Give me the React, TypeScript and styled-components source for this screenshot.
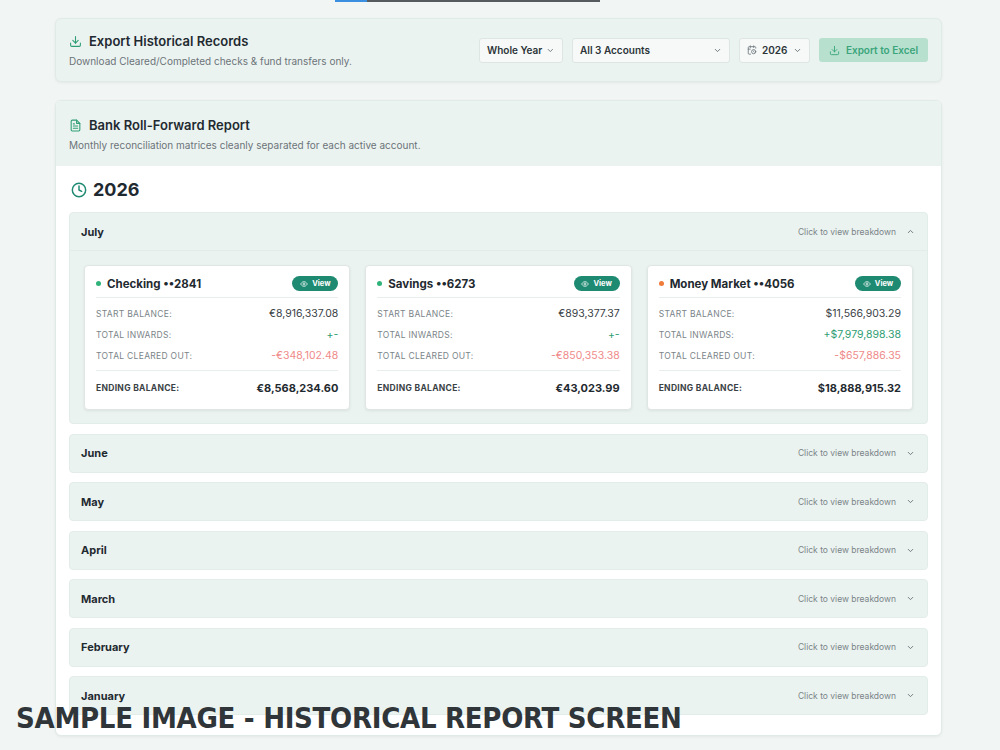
import React from "react";
import styled, { createGlobalStyle } from "styled-components";

const Global = createGlobalStyle`
  html, body { margin: 0; padding: 0; background: #f1f5f4; font-family: Inter, "Noto Sans", sans-serif; color: #1f2a30; }
  * { box-sizing: border-box; }
`;

const Page = styled.div`
  position: relative;
  width: 1000px;
  height: 750px;
  overflow: hidden;
  padding: 0 58px 0 55px;
`;
const TopBar = styled.div`
  display: flex;
  margin-left: 280px;
  height: 2px;
  margin-bottom: 16px;
`;
const Seg = styled.div<{ $w: number; $c: string }>`
  width: ${(p) => p.$w}px;
  background: ${(p) => p.$c};
`;
const ExportCard = styled.div`
  display: flex;
  align-items: center;
  justify-content: space-between;
  height: 64px;
  background: #ebf3f0;
  border: 1px solid #e0ebe7;
  border-radius: 6px;
  box-shadow: 0 1px 3px rgba(0,0,0,0.06);
  padding: 0 13px;
  margin-bottom: 18px;
`;
const TitleRow = styled.div`
  display: flex;
  align-items: center;
  gap: 7px;
  font-size: 13px;
  font-weight: 600;
  color: #1f2a30;
`;
const Sub = styled.div`
  font-size: 10px;
  color: #6b7479;
  margin-top: 6px;
`;
const Controls = styled.div`
  display: flex;
  gap: 9px;
  align-items: center;
`;
const Select = styled.div<{ $w: number }>`
  width: ${(p) => p.$w}px;
  height: 25px;
  border: 1px solid #dde6e3;
  border-radius: 3px;
  background: #f6f9f8;
  display: flex;
  align-items: center;
  justify-content: space-between;
  padding: 0 7px 0 7px;
  font-size: 10px;
  font-weight: 600;
  color: #2c3438;
  gap: 4px;
  white-space: nowrap;
`;
const SelInner = styled.span`
  display: flex;
  align-items: center;
  gap: 5px;
`;
const ExportBtn = styled.div`
  height: 24px;
  width: 109px;
  background: #b8e0cf;
  border-radius: 3px;
  display: flex;
  align-items: center;
  justify-content: center;
  gap: 6px;
  font-size: 10px;
  font-weight: 600;
  color: #3aa57a;
  white-space: nowrap;
`;
const ReportCard = styled.div`
  background: #fff;
  border: 1px solid #e0ebe7;
  border-radius: 6px;
  box-shadow: 0 1px 3px rgba(0,0,0,0.06);
  overflow: hidden;
  height: 636px;
`;
const ReportHead = styled.div`
  background: #ebf3f0;
  padding: 16px 13px 15px;
  height: 65px;
`;
const ReportBody = styled.div`
  padding: 13px 13px 0;
`;
const Year = styled.div`
  display: flex;
  align-items: center;
  gap: 6px;
  font-size: 18px;
  font-weight: 700;
  margin-left: 2px;
  margin-bottom: 12px;
`;
const List = styled.div`
  display: flex;
  flex-direction: column;
  gap: 9.5px;
`;
const Month = styled.div`
  background: #ebf3f0;
  border: 1px solid #e2ece8;
  border-radius: 4px;
`;
const MonthHead = styled.div`
  height: 37px;
  display: flex;
  align-items: center;
  justify-content: space-between;
  padding: 0 12px 0 11px;
  font-size: 11px;
  font-weight: 700;
  color: #1f2a30;
`;
const Hint = styled.span`
  display: flex;
  align-items: center;
  gap: 10px;
  font-size: 8.5px;
  font-weight: 400;
  color: #7a8488;
`;
const Cards = styled.div`
  border-top: 1px solid #e2ece8;
  display: grid;
  grid-template-columns: repeat(3, 1fr);
  gap: 15px;
  padding: 14px 14px 13px;
`;
const Acct = styled.div`
  background: #fff;
  border: 1px solid #dfe6e4;
  border-radius: 4px;
  box-shadow: 0 1px 3px rgba(0,0,0,0.07);
  padding: 10px 11px 9px;
`;
const AcctHead = styled.div`
  display: flex;
  align-items: center;
  justify-content: space-between;
  padding-bottom: 6px;
  border-bottom: 1px solid #e8eeec;
`;
const AcctName = styled.span`
  display: flex;
  align-items: center;
  gap: 6px;
  font-size: 11.5px;
  font-weight: 700;
`;
const Dot = styled.span<{ $c: string }>`
  width: 5px;
  height: 5px;
  border-radius: 50%;
  background: ${(p) => p.$c};
`;
const ViewBtn = styled.span`
  background: #1f8a72;
  color: #fff;
  font-size: 7.5px;
  font-weight: 700;
  border-radius: 8px;
  height: 15px;
  width: 46px;
  display: flex;
  align-items: center;
  justify-content: center;
  gap: 4px;
`;
const Lines = styled.div`
  padding-top: 5px;
`;
const Line = styled.div<{ $total?: boolean }>`
  display: flex;
  justify-content: space-between;
  align-items: center;
  height: 21px;
  font-size: 8.5px;
  letter-spacing: 0.3px;
  color: #7a8488;
  ${(p) => p.$total && `border-top:1px solid #e8eeec; margin-top:4px; height:30px; padding-top:4px; color:#3a4246; font-weight:700;`}
`;
const Val = styled.span<{ $c?: string; $b?: boolean }>`
  font-size: ${(p) => (p.$b ? "11px" : "10.5px")};
  letter-spacing: 0;
  color: ${(p) => p.$c || "#3a4246"};
  font-weight: ${(p) => (p.$b ? 700 : 400)};
`;
const Watermark = styled.div`
  position: absolute;
  left: 16px;
  top: 701px;
  font-family: "DejaVu Sans Condensed", "DejaVu Sans", sans-serif;
  font-weight: 700;
  font-size: 29px;
  letter-spacing: -0.3px;
  color: #2f3538;
  white-space: nowrap;
`;

const Chevron = ({ up }: { up?: boolean }) => (
  <svg width="9" height="9" viewBox="0 0 24 24" fill="none" stroke="#6b7479" strokeWidth="2.5" strokeLinecap="round" strokeLinejoin="round">
    <path d={up ? "M6 15l6-6 6 6" : "M6 9l6 6 6-6"} />
  </svg>
);
const DownloadIcon = ({ c = "#2f9e74", s = 13 }: { c?: string; s?: number }) => (
  <svg width={s} height={s} viewBox="0 0 24 24" fill="none" stroke={c} strokeWidth="2" strokeLinecap="round" strokeLinejoin="round">
    <path d="M21 15v4a2 2 0 0 1-2 2H5a2 2 0 0 1-2-2v-4" />
    <path d="M7 10l5 5 5-5" />
    <path d="M12 15V3" />
  </svg>
);
const FileIcon = () => (
  <svg width="13" height="13" viewBox="0 0 24 24" fill="none" stroke="#2f9e74" strokeWidth="2" strokeLinecap="round" strokeLinejoin="round">
    <path d="M14 2H6a2 2 0 0 0-2 2v16a2 2 0 0 0 2 2h12a2 2 0 0 0 2-2V8z" />
    <path d="M14 2v6h6" />
    <path d="M16 13H8M16 17H8M10 9H8" />
  </svg>
);
const ClockIcon = () => (
  <svg width="16" height="16" viewBox="0 0 24 24" fill="none" stroke="#1f8a72" strokeWidth="2.2" strokeLinecap="round" strokeLinejoin="round">
    <circle cx="12" cy="12" r="10" />
    <path d="M12 6v6l4 2" />
  </svg>
);
const CalIcon = () => (
  <svg width="10" height="10" viewBox="0 0 24 24" fill="none" stroke="#6b7479" strokeWidth="2" strokeLinecap="round" strokeLinejoin="round">
    <path d="M21 7.5V6a2 2 0 0 0-2-2H5a2 2 0 0 0-2 2v14a2 2 0 0 0 2 2h3.5" />
    <path d="M16 2v4M8 2v4M3 10h5" />
    <circle cx="16" cy="16" r="5" />
    <path d="M16 14.5V16l1 1" />
  </svg>
);
const EyeIcon = () => (
  <svg width="8" height="8" viewBox="0 0 24 24" fill="none" stroke="#fff" strokeWidth="2.2">
    <path d="M2 12s3.5-7 10-7 10 7 10 7-3.5 7-10 7S2 12 2 12z" />
    <circle cx="12" cy="12" r="3" />
  </svg>
);

const accounts = [
  { name: "Checking ••2841", dot: "#2fb37a", start: "€8,916,337.08", inw: "+-", out: "-€348,102.48", end: "€8,568,234.60" },
  { name: "Savings ••6273", dot: "#2fb37a", start: "€893,377.37", inw: "+-", out: "-€850,353.38", end: "€43,023.99" },
  { name: "Money Market ••4056", dot: "#f07b3a", start: "$11,566,903.29", inw: "+$7,979,898.38", out: "-$657,886.35", end: "$18,888,915.32" },
];
const months = ["June", "May", "April", "March", "February", "January"];

export default function App() {
  return (
    <>
      <Global />
      <Page>
        <TopBar>
          <Seg $w={32} $c="#3b8fe0" />
          <Seg $w={233} $c="#555b5e" />
        </TopBar>
        <ExportCard>
          <div>
            <TitleRow><DownloadIcon /> Export Historical Records</TitleRow>
            <Sub>Download Cleared/Completed checks &amp; fund transfers only.</Sub>
          </div>
          <Controls>
            <Select $w={84}>Whole Year <Chevron /></Select>
            <Select $w={158}>All 3 Accounts <Chevron /></Select>
            <Select $w={71}><SelInner><CalIcon /> 2026</SelInner><Chevron /></Select>
            <ExportBtn><DownloadIcon c="#3aa57a" s={11} /> Export to Excel</ExportBtn>
          </Controls>
        </ExportCard>
        <ReportCard>
          <ReportHead>
            <TitleRow><FileIcon /> Bank Roll-Forward Report</TitleRow>
            <Sub>Monthly reconciliation matrices cleanly separated for each active account.</Sub>
          </ReportHead>
          <ReportBody>
            <Year><ClockIcon /> 2026</Year>
            <List>
              <Month>
                <MonthHead>July<Hint>Click to view breakdown <Chevron up /></Hint></MonthHead>
                <Cards>
                  {accounts.map((a) => (
                    <Acct key={a.name}>
                      <AcctHead>
                        <AcctName><Dot $c={a.dot} />{a.name}</AcctName>
                        <ViewBtn><EyeIcon /> View</ViewBtn>
                      </AcctHead>
                      <Lines>
                        <Line>START BALANCE:<Val>{a.start}</Val></Line>
                        <Line>TOTAL INWARDS:<Val $c="#2f9e74">{a.inw}</Val></Line>
                        <Line>TOTAL CLEARED OUT:<Val $c="#f08a8a">{a.out}</Val></Line>
                        <Line $total>ENDING BALANCE:<Val $b $c="#1f2a30">{a.end}</Val></Line>
                      </Lines>
                    </Acct>
                  ))}
                </Cards>
              </Month>
              {months.map((m) => (
                <Month key={m}>
                  <MonthHead>{m}<Hint>Click to view breakdown <Chevron /></Hint></MonthHead>
                </Month>
              ))}
            </List>
          </ReportBody>
        </ReportCard>
        <Watermark>SAMPLE IMAGE - HISTORICAL REPORT SCREEN</Watermark>
      </Page>
    </>
  );
}
